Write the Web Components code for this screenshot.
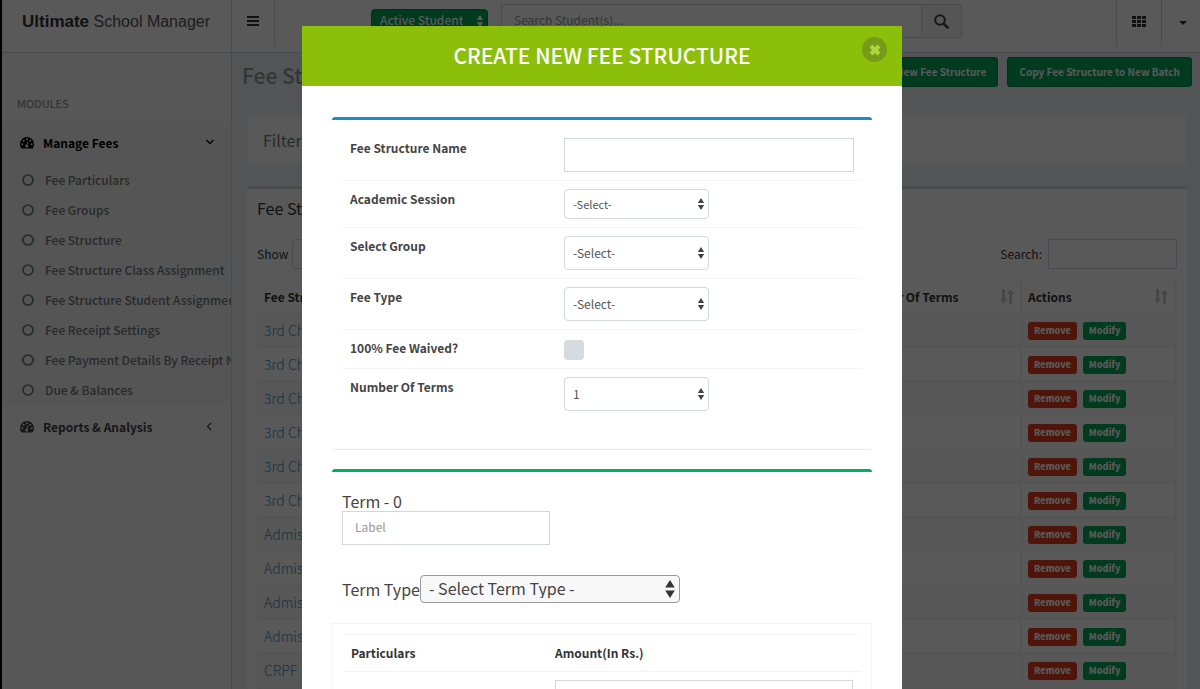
<!DOCTYPE html>
<html lang="en">
<head>
<meta charset="utf-8">
<meta name="viewport" content="width=device-width, initial-scale=1">
<title>Ultimate School Manager</title>
<style>
  html, body {
    margin: 0;
    height: 100%;
  }
  body {
    box-sizing: border-box;
    border-left: 2px solid #000;
    overflow: hidden;
    font-family: "Noto Sans CJK SC", "Open Sans", sans-serif;
    font-size: 12px;
    line-height: 20px;
    color: #333;
    background: #ecf0f5;
  }
  .shell {
    display: grid;
    grid-template-columns: 230px minmax(0, 1fr);
    grid-template-rows: auto minmax(0, 1fr);
    height: 100%;
  }
  school-header {
    grid-column: 1 / -1;
  }
</style>
</head>
<body>
  <div class="shell">
    <school-header></school-header>
    <school-sidebar></school-sidebar>
    <fee-page></fee-page>
  </div>
  <modal-dialog heading="CREATE NEW FEE STRUCTURE">
    <content-box tone="primary">
      <field-row label="Fee Structure Name" kind="text"></field-row>
      <field-row label="Academic Session" kind="select" value="-Select-" small></field-row>
      <field-row label="Select Group" kind="select" value="-Select-"></field-row>
      <field-row label="Fee Type" kind="select" value="-Select-"></field-row>
      <field-row label="100% Fee Waived?" kind="checkbox"></field-row>
      <field-row label="Number Of Terms" kind="select" value="1"></field-row>
    </content-box>
    <content-box tone="success">
      <term-editor></term-editor>
    </content-box>
  </modal-dialog>

<script>
  const controlStyles = `
    * {
      box-sizing: border-box;
    }
    input, select, button {
      font: inherit;
      color: inherit;
      margin: 0;
      border-radius: 0;
    }
    input::placeholder {
      color: #999;
      opacity: 1;
    }
    .text {
      height: 34px;
      padding: 4px 12px 8px;
      border: 1px solid #d2d6de;
      background: #fff;
      color: #555;
    }
    .pick {
      display: inline-grid;
      align-items: center;
    }
    .pick select {
      grid-area: 1 / 1;
      width: 100%;
      height: 34px;
      padding: 0 24px 0 8px;
      appearance: none;
      border: 1px solid #d2d6de;
      border-radius: 4px;
      background: #fff;
      color: #555;
    }
    .pick svg {
      grid-area: 1 / 1;
      justify-self: end;
      margin-right: 4px;
      pointer-events: none;
    }
  `;

  const arrows = (color, size = 12) => `
    <svg width="${size * 2 / 3}" height="${size}" viewBox="0 0 8 12" fill="${color}" aria-hidden="true">
      <path d="M4 0 7.2 5H.8zM4 12 .8 7h6.4z"/>
    </svg>`;

  class SchoolHeader extends HTMLElement {
    connectedCallback() {
      this.attachShadow({ mode: 'open' });
      this.shadowRoot.innerHTML = `
        <style>
          ${controlStyles}
          :host {
            display: flex;
            height: 53px;
            box-sizing: border-box;
            background: #fff;
            border-bottom: 1px solid #d2d6de;
          }
          .logo {
            width: 230px;
            padding-left: 20px;
            border-right: 1px solid #d2d6de;
            font: 16px/44px "Liberation Sans", Arial, sans-serif;
            color: #555;
            text-decoration: none;
            white-space: nowrap;
          }
          .logo b {
            font-size: 17px;
            color: #333;
          }
          nav {
            flex: 1;
            display: flex;
            height: 46px;
          }
          nav > button {
            display: grid;
            place-items: center;
            height: 46px;
            padding: 0 0 4px;
            border: 0;
            background: none;
            color: #333;
          }
          .toggle {
            width: 43px;
            border-right: 1px solid #d2d6de !important;
          }
          .status {
            width: 117px;
            height: 24px;
            margin: 9px 13px 0 96px;
          }
          .status select {
            height: 24px;
            padding-bottom: 2px;
            border-color: #008d4c;
            background: #00a65a;
            color: #fff;
            font-weight: 500;
          }
          form {
            flex: 0 1 461px;
            display: flex;
            margin: 4px auto 0 0;
            height: 34px;
          }
          form input {
            flex: 1;
            min-width: 0;
          }
          form button {
            display: grid;
            place-items: center;
            width: 40px;
            border: 1px solid #d2d6de;
            border-left: 0;
            border-radius: 0 3px 3px 0;
            background: #f4f4f4;
            color: #444;
          }
          .apps {
            width: 46px;
            border-left: 1px solid #d2d6de !important;
            border-right: 1px solid #d2d6de !important;
          }
          nav .user {
            width: 38px;
            padding: 0 0 0 4px;
          }
        </style>
        <a class="logo" href="#"><b>Ultimate</b> School Manager</a>
        <nav>
          <button class="toggle" aria-label="Toggle navigation">
            <svg width="12" height="12" viewBox="0 0 12 12" fill="currentColor"><path d="M0 1h12v2H0zM0 5h12v2H0zM0 9h12v2H0z"/></svg>
          </button>
          <span class="pick status">
            <select aria-label="Student status"><option>Active Student</option></select>
            ${arrows('#fff')}
          </span>
          <form>
            <input class="text" type="text" placeholder="Search Student(s)..." aria-label="Search students">
            <button type="button" aria-label="Search">
              <svg width="15" height="15" viewBox="0 0 15 15" fill="none" stroke="currentColor"><circle cx="6" cy="6" r="4.8" stroke-width="2"/><path d="m9.5 9.5 4 4" stroke-width="2.6" stroke-linecap="round"/></svg>
            </button>
          </form>
          <button class="apps" aria-label="Apps">
            <svg width="14" height="11" viewBox="0 0 14 11" fill="currentColor"><path d="M0 0h4v3H0zM5 0h4v3H5zM10 0h4v3h-4zM0 4h4v3H0zM5 4h4v3H5zM10 4h4v3h-4zM0 8h4v3H0zM5 8h4v3H5zM10 8h4v3h-4z"/></svg>
          </button>
          <button class="user" aria-label="Account">
            <svg width="8" height="4" viewBox="0 0 8 4" fill="currentColor"><path d="M0 0h8L4 4z"/></svg>
          </button>
        </nav>
      `;
    }
  }
  customElements.define('school-header', SchoolHeader);

  class SchoolSidebar extends HTMLElement {
    connectedCallback() {
      const gauge = `
        <svg width="14" height="12" viewBox="0 0 14 12" aria-hidden="true">
          <path fill="currentColor" d="M7 0a7 7 0 0 0-7 7c0 1.600.5 3 1.200 4.200.2.300.4.400.7.400h10.200c.3 0 .5-.1.700-.4C13.500 10 14 8.600 14 7a7 7 0 0 0-7-7z"/>
          <g fill="#f6f6f8"><circle cx="2.300" cy="7.200" r="1"/><circle cx="3.700" cy="3.800" r="1"/><circle cx="7" cy="2.300" r="1"/><circle cx="10.300" cy="3.800" r="1"/><circle cx="11.700" cy="7.200" r="1"/><circle cx="6.700" cy="8.900" r="1.500"/></g>
          <path d="m6.800 8.800 1.100-4.300" stroke="#f6f6f8"/>
        </svg>`;
      const items = [
        'Fee Particulars', 'Fee Groups', 'Fee Structure', 'Fee Structure Class Assignment',
        'Fee Structure Student Assignment', 'Fee Receipt Settings',
        'Fee Payment Details By Receipt No', 'Due &amp; Balances'
      ];
      this.attachShadow({ mode: 'open' });
      this.shadowRoot.innerHTML = `
        <style>
          :host {
            display: block;
            box-sizing: border-box;
            overflow: hidden;
            background: #f9fafc;
            border-right: 1px solid #d2d6de;
          }
          h2 {
            margin: 0;
            padding: 40px 15px 8px;
            font-size: 11px;
            font-weight: 400;
            color: #848484;
          }
          a {
            display: flex;
            align-items: center;
            color: #777;
            text-decoration: none;
            white-space: nowrap;
          }
          .module {
            gap: 9px;
            height: 44px;
            padding: 0 16px 0 18px;
            font-weight: 700;
            color: #444;
          }
          .module .chevron {
            margin-left: auto;
          }
          .active {
            background: #f4f4f5;
          }
          .active .module {
            color: #000;
          }
          ul {
            margin: 0;
            padding: 0;
            list-style: none;
          }
          li a {
            gap: 11px;
            height: 30px;
            padding-left: 20px;
            font-weight: 500;
          }
          li svg {
            flex: none;
          }
        </style>
        <h2>MODULES</h2>
        <div class="active">
          <a class="module" href="#">${gauge}Manage Fees
            <svg class="chevron" width="10" height="10" viewBox="0 0 10 10" fill="none" stroke="currentColor" stroke-width="1.300"><path d="m1.500 2 3.500 3.500L8.500 2"/></svg>
          </a>
          <ul>
            ${items.map(text => `<li><a href="#"><svg width="12" height="12" viewBox="0 0 12 12" fill="none" stroke="currentColor" stroke-width="1.700"><circle cx="6" cy="6" r="5"/></svg>${text}</a></li>`).join('')}
          </ul>
        </div>
        <a class="module" href="#">${gauge}Reports &amp; Analysis
          <svg class="chevron" width="10" height="10" viewBox="0 0 10 10" fill="none" stroke="currentColor" stroke-width="1.300"><path d="M6 1 2.500 4.500 6 8"/></svg>
        </a>
      `;
    }
  }
  customElements.define('school-sidebar', SchoolSidebar);

  class FeePage extends HTMLElement {
    connectedCallback() {
      this.attachShadow({ mode: 'open' });
      this.shadowRoot.innerHTML = `
        <style>
          :host {
            display: block;
            overflow: hidden;
            padding: 4px 8px 0 10px;
          }
          header {
            display: flex;
            align-items: flex-start;
            gap: 9px;
          }
          h1 {
            flex: 1;
            margin: 0;
            font-size: 21px;
            font-weight: 500;
            line-height: 36px;
            color: #999;
          }
          button {
            height: 30px;
            padding: 0 11px;
            border: 1px solid #008d4c;
            border-radius: 3px;
            background: #00a65a;
            color: #fff;
            font: inherit;
            font-size: 10px;
            font-weight: 700;
          }
          section {
            margin: 0 5px;
            background: #fff;
            border-radius: 3px;
          }
          .filter {
            margin-top: 22px;
            padding: 14px 15px;
            border: 1px solid #f4f4f4;
            font-size: 16px;
            color: #777;
          }
          .list {
            margin-top: 21px;
            padding: 0 10px;
            border-top: 3px solid #d2d6de;
          }
          h2 {
            margin: 0;
            font-size: 16px;
            font-weight: 400;
            line-height: 38px;
          }
        </style>
        <header>
          <h1>Fee Structure</h1>
          <button>Create New Fee Structure</button>
          <button>Copy Fee Structure to New Batch</button>
        </header>
        <section class="filter">Filter</section>
        <section class="list">
          <h2>Fee Structure</h2>
          <fee-table></fee-table>
        </section>
      `;
    }
  }
  customElements.define('fee-page', FeePage);

  class FeeTable extends HTMLElement {
    connectedCallback() {
      const names = [...Array(6).fill('3rd Child'), ...Array(4).fill('Admission'), 'CRPF'];
      const sort = `<svg width="14" height="15" viewBox="0 0 14 15" fill="#ccc" aria-hidden="true"><path d="M2 0h3v10h2l-3.500 4.500L0 10h2zM9 15V5H7l3.500-4.500L14 5h-2v10z"/></svg>`;
      this.attachShadow({ mode: 'open' });
      this.shadowRoot.innerHTML = `
        <style>
          ${controlStyles}
          :host {
            display: block;
          }
          .tools {
            display: flex;
            justify-content: space-between;
            padding-top: 12px;
          }
          .tools label {
            display: flex;
            align-items: center;
            gap: 4px;
            line-height: 28px;
          }
          .tools .find {
            gap: 6px;
          }
          .tools select {
            width: 60px;
            height: 30px;
            padding-left: 12px;
            border: 1px solid #d2d6de;
            border-radius: 4px;
            background: #fff;
          }
          .tools .text {
            width: 129px;
            height: 30px;
          }
          table {
            width: 100%;
            margin-top: 11px;
            table-layout: fixed;
            border-spacing: 0;
            border: 1px solid #f4f4f4;
          }
          th, td {
            height: 34px;
            padding: 0 6px;
            border: 1px solid #f4f4f4;
            border-width: 0 2px 2px 0;
            text-align: left;
            white-space: nowrap;
          }
          th {
            height: 33px;
          }
          tbody tr:nth-child(odd) {
            background: #f9f9f9;
          }
          th div {
            display: flex;
            justify-content: space-between;
            align-items: center;
          }
          .terms {
            width: 173px;
          }
          .actions {
            width: 154px;
          }
          td:first-child {
            font-size: 14px;
            font-weight: 300;
          }
          a {
            color: #3c8dbc;
            text-decoration: none;
          }
          .buttons {
            display: flex;
            gap: 6px;
            padding-top: 2px;
          }
          button {
            padding: 0 6px;
            height: 18px;
            border: 0;
            border-radius: 3px;
            color: #fff;
            font-size: 9px;
            font-weight: 900;
            line-height: 16px;
          }
          .remove {
            background: #e63c1e;
          }
          .modify {
            background: #00a65a;
          }
        </style>
        <div class="tools">
          <label>Show <select><option>50</option></select></label>
          <label class="find">Search: <input class="text" type="text"></label>
        </div>
        <table>
          <thead>
            <tr>
              <th>Fee Structure</th>
              <th class="terms"><div>Number Of Terms ${sort}</div></th>
              <th class="actions"><div>Actions ${sort}</div></th>
            </tr>
          </thead>
          <tbody>
            ${names.map(name => `
              <tr>
                <td><a href="#">${name}</a></td>
                <td></td>
                <td><div class="buttons"><button class="remove">Remove</button><button class="modify">Modify</button></div></td>
              </tr>`).join('')}
          </tbody>
        </table>
      `;
    }
  }
  customElements.define('fee-table', FeeTable);

  class ModalDialog extends HTMLElement {
    connectedCallback() {
      this.attachShadow({ mode: 'open' });
      this.shadowRoot.innerHTML = `
        <style>
          :host {
            position: fixed;
            inset: 0;
            box-sizing: border-box;
            padding: 26px 0 0 4px;
            overflow: hidden;
            background: rgba(0, 0, 0, 0.65);
          }
          .dialog {
            max-width: 600px;
            min-height: 100%;
            margin: 0 auto;
            background: #fff;
          }
          header {
            display: grid;
            grid-template-columns: 25px 1fr 25px;
            padding: 0 15px;
            height: 60px;
            background: #8bbf09;
            color: #fff;
          }
          h2 {
            grid-column: 2;
            margin: 0;
            font-size: 21px;
            font-weight: 500;
            line-height: 58px;
            text-align: center;
          }
          button {
            display: grid;
            place-items: center;
            width: 25px;
            height: 25px;
            margin-top: 11px;
            padding: 0;
            border: 0;
            border-radius: 50%;
            background: #769b19;
            color: #afd63e;
          }
          .body {
            display: grid;
            gap: 20px;
            padding: 31px 30px;
          }
        </style>
        <div class="dialog" role="dialog" aria-labelledby="heading">
          <header>
            <h2 id="heading">${this.getAttribute('heading')}</h2>
            <button aria-label="Close">
              <svg width="12" height="12" viewBox="0 0 12 12" stroke="currentColor" stroke-width="4"><path d="m2 2 8 8m0-8-8 8"/></svg>
            </button>
          </header>
          <div class="body"><slot></slot></div>
        </div>
      `;
    }
  }
  customElements.define('modal-dialog', ModalDialog);

  class ContentBox extends HTMLElement {
    connectedCallback() {
      this.attachShadow({ mode: 'open' });
      this.shadowRoot.innerHTML = `
        <style>
          :host {
            display: block;
            border-top: 3px solid #1f8dc4;
            border-radius: 3px;
            box-shadow: 0 1px 1px rgba(0, 0, 0, 0.1);
          }
          :host([tone="primary"]) {
            padding: 10px 10px 30px;
          }
          :host([tone="success"]) {
            border-top-color: #00b05a;
          }
        </style>
        <slot></slot>
      `;
    }
  }
  customElements.define('content-box', ContentBox);

  class FieldRow extends HTMLElement {
    connectedCallback() {
      const value = this.getAttribute('value');
      const controls = {
        text: '<input class="text" id="field" type="text">',
        checkbox: '<input id="field" type="checkbox">',
        select: `<span class="pick"><select id="field"><option>${value}</option></select>${arrows('#444')}</span>`
      };
      this.attachShadow({ mode: 'open' });
      this.shadowRoot.innerHTML = `
        <style>
          ${controlStyles}
          :host {
            display: grid;
            grid-template-columns: 198px minmax(0, 1fr);
            column-gap: 16px;
            padding: 8px;
            border-top: 1px solid #f4f4f4;
            color: #444;
          }
          :host(:first-child) {
            border-top: 0;
          }
          label {
            font-weight: 700;
          }
          .text {
            width: 100%;
          }
          .pick {
            width: 145px;
          }
          :host([small]) select {
            height: 30px;
            font-size: 11px;
          }
          [type="checkbox"] {
            width: 20px;
            height: 20px;
            margin-top: 2px;
            appearance: none;
            border-radius: 4px;
            background: #d5dbde;
          }
        </style>
        <label for="field">${this.getAttribute('label')}</label>
        ${controls[this.getAttribute('kind')]}
      `;
    }
  }
  customElements.define('field-row', FieldRow);

  class TermEditor extends HTMLElement {
    connectedCallback() {
      this.attachShadow({ mode: 'open' });
      this.shadowRoot.innerHTML = `
        <style>
          ${controlStyles}
          :host {
            display: block;
            font-size: 16px;
            color: #444;
          }
          .term {
            display: grid;
            justify-items: start;
            padding: 19px 10px 30px;
          }
          .term .text {
            width: 208px;
            font-size: 12px;
          }
          .type {
            display: flex;
            align-items: center;
            padding: 0 10px 20px;
          }
          .type .pick {
            width: 260px;
          }
          .type select {
            height: 28px;
            padding-bottom: 2px;
            border-color: #999;
            background: #f8f8f8;
            color: #444;
          }
          .particulars {
            border: 1px solid #f4f4f4;
            padding: 10px;
          }
          table {
            width: 100%;
            table-layout: fixed;
            border-spacing: 0;
            font-size: 12px;
          }
          th, td {
            padding: 8px;
            border-top: 1px solid #f4f4f4;
            text-align: left;
            color: #333;
          }
          th:first-child {
            width: 204px;
          }
          td input {
            width: 100%;
          }
        </style>
        <div class="term">
          <label for="label">Term - 0</label>
          <input class="text" id="label" type="text" placeholder="Label">
        </div>
        <div class="type">
          <label for="type">Term Type</label>
          <span class="pick"><select id="type"><option>- Select Term Type -</option></select>${arrows('#333', 18)}</span>
        </div>
        <div class="particulars">
          <table>
            <thead><tr><th>Particulars</th><th>Amount(In Rs.)</th></tr></thead>
            <tbody><tr><td></td><td><input class="text" type="text" aria-label="Amount"></td></tr></tbody>
          </table>
        </div>
      `;
    }
  }
  customElements.define('term-editor', TermEditor);
</script>
</body>
</html>
